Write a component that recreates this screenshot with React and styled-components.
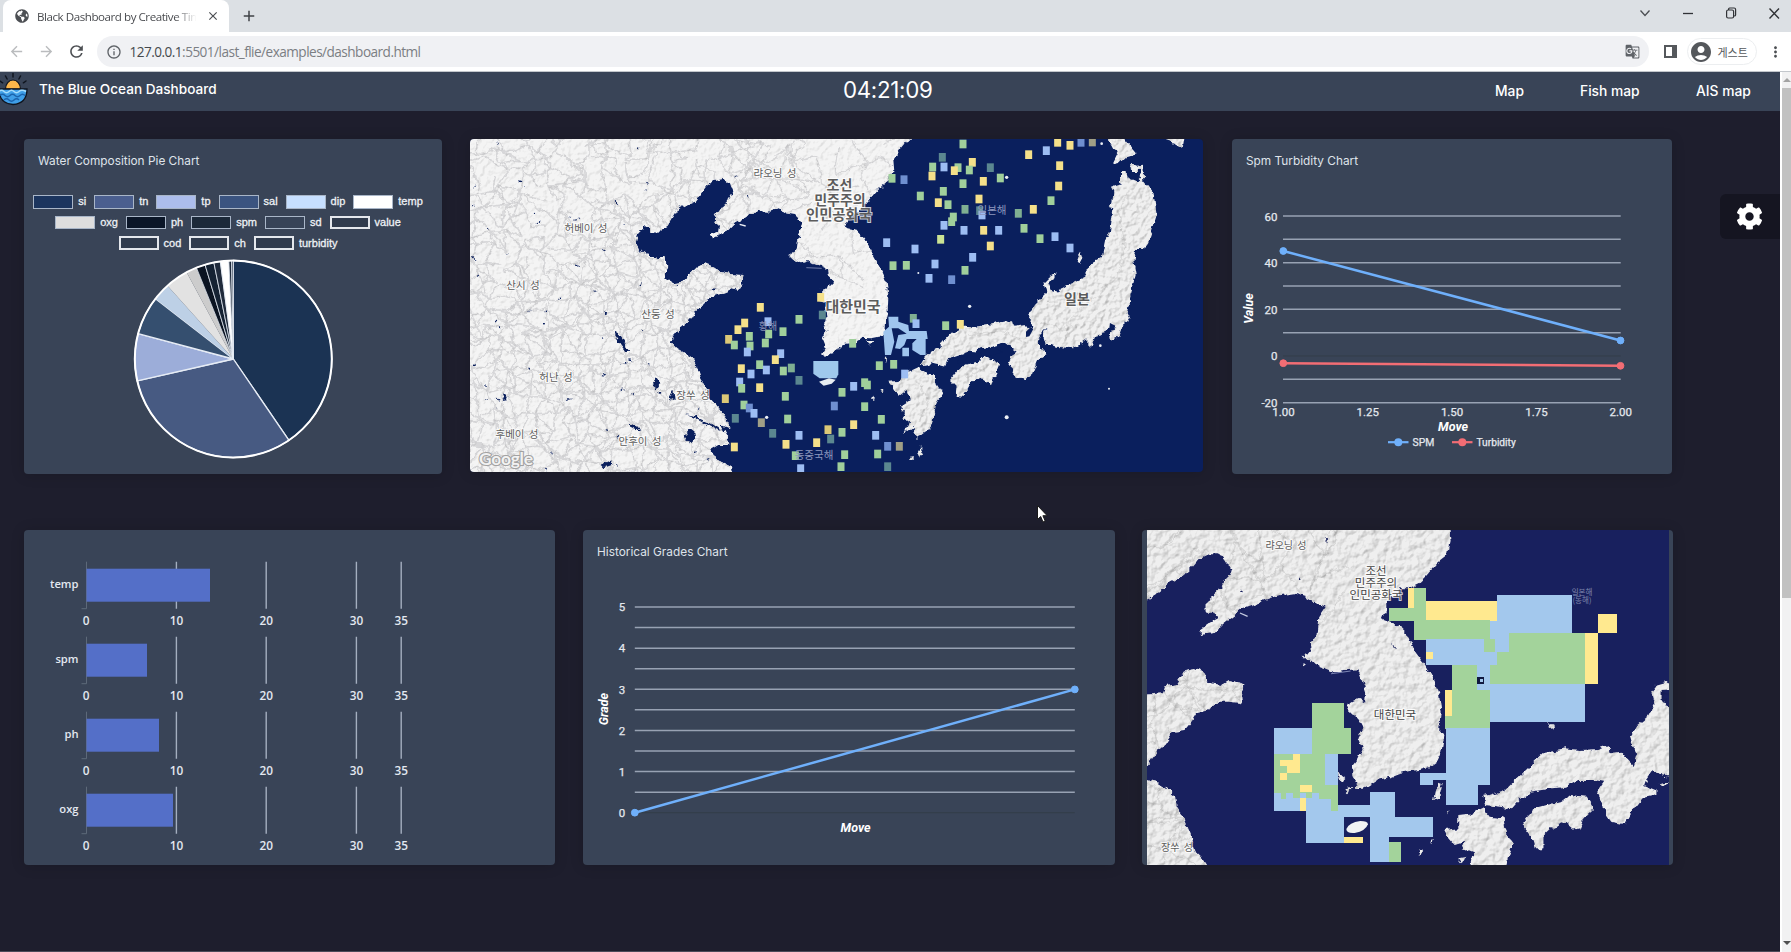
import React from "react";
import styled, { createGlobalStyle, css } from "styled-components";
import { FaCog, FaGlobeAmericas } from "react-icons/fa";
import { MdClose, MdAdd, MdArrowBack, MdArrowForward, MdRefresh, MdInfoOutline, MdGTranslate, MdAccountCircle, MdMoreVert } from "react-icons/md";

const GlobalStyle = createGlobalStyle`
  * { box-sizing: border-box; }
  body { margin: 0; background: #1e1e2d; font-family: Inter, "Noto Sans CJK KR", sans-serif; overflow: hidden; }
`;

const Window = styled.div`
  width: 1791px;
  height: 952px;
  display: flex;
  flex-direction: column;
  position: relative;
  overflow: hidden;
`;

/* ---------- browser chrome ---------- */
const TabStrip = styled.div`
  height: 32px;
  background: #dce0e4;
  display: flex;
  align-items: flex-end;
  padding-left: 3px;
`;
const Tab = styled.div`
  width: 226px;
  height: 32px;
  background: #fff;
  border-radius: 8px 8px 0 0;
  display: flex;
  align-items: center;
  padding: 0 9px 0 12px;
  color: #4c4f53;
`;
const TabTitle = styled.span`
  flex: 1;
  margin: 0 8px 0 8px;
  white-space: nowrap;
  overflow: hidden;
  font: 11.6px "Open Sans", sans-serif;
  letter-spacing: -0.46px;
  color: #4a4c50;
  mask-image: linear-gradient(90deg, #000 86%, transparent 99%);
`;
const NewTab = styled.div`
  width: 40px;
  height: 32px;
  display: flex;
  align-items: center;
  justify-content: center;
  color: #3f4246;
`;
const WindowControls = styled.div`
  margin-left: auto;
  height: 26px;
  display: flex;
  align-items: center;
  align-self: flex-start;
  padding-right: 9px;
  gap: 27px;
`;
const Toolbar = styled.div`
  height: 40px;
  background: #fff;
  border-bottom: 1px solid #c3c7cc;
  display: flex;
  align-items: center;
  padding: 0 7px 0 8px;
`;
const NavIcon = styled.span`
  display: flex;
  width: ${(p) => p.$w || 29.5}px;
  margin-left: ${(p) => (p.$end ? "auto" : 0)};
  color: ${(p) => (p.$off ? "#babcbe" : "#4c4f53")};
`;
const UrlBar = styled.div`
  width: 1552px;
  height: 31px;
  border-radius: 16px;
  background: #f0f1f4;
  display: flex;
  align-items: center;
  padding: 0 9px 0 9px;
  color: #5f6368;
`;
const UrlText = styled.span`
  flex: 1;
  margin-left: 8px;
  font: 13.6px "Open Sans", sans-serif;
  letter-spacing: -0.53px;
  color: #7b7e83;
  b { font-weight: 400; color: #46494d; }
`;
const SidePanelIcon = styled.span`
  width: 13px;
  height: 13px;
  margin: 0 10px 0 15px;
  border: 2px solid #55585c;
  border-right-width: 5px;
`;
const GuestPill = styled.div`
  width: 70px;
  height: 27px;
  border: 1px solid #eceef0;
  border-radius: 14px;
  display: flex;
  align-items: center;
  gap: 5px;
  padding-left: 1px;
  color: #54575b;
  font: 11px "Noto Sans CJK KR", sans-serif;
`;

/* ---------- page ---------- */
const Viewport = styled.div`
  flex: 1;
  display: flex;
  min-height: 0;
`;
const Page = styled.div`
  width: 1780px;
  background: #1e1e2d;
  border-bottom: 1px solid #4b4b5a;
`;
const Scrollbar = styled.div`
  width: 11px;
  background: #f1f1f2;
  border-left: 2px solid #fff;
  display: flex;
  flex-direction: column;
  align-items: center;
`;
const Arrow = styled.i`
  width: 0;
  height: 0;
  border: 4px solid transparent;
  ${(p) => p.$down
    ? css`border-top-color: #505050; margin: auto 0 3px;`
    : css`border-bottom-color: #a3a3a3; margin: 2px 0 6px;`}
`;
const Thumb = styled.div`
  width: 9px;
  height: 510px;
  background: #c1c1c1;
`;
const NavBar = styled.header`
  height: 39px;
  background: #394457;
  color: #fff;
  display: flex;
  align-items: center;
`;
const Brand = styled.div`
  width: 843px;
  display: flex;
  align-items: center;
  gap: 10px;
  font-size: 13.6px;
  font-weight: 500;
  padding-bottom: 5px;
`;
const Clock = styled.div`
  width: 652px;
  font-size: 22.3px;
  padding-bottom: 5px;
  letter-spacing: -0.3px;
`;
const NavLink = styled.a`
  font-size: 13.8px;
  font-weight: 500;
  width: ${(p) => p.$w}px;
  padding-bottom: 2px;
  white-space: nowrap;
`;
const Row = styled.div`
  display: flex;
  align-items: flex-start;
  padding-left: 24px;
  margin-top: ${(p) => p.$top}px;
`;
const Card = styled.section`
  width: ${(p) => p.$w}px;
  height: ${(p) => p.$h || 335}px;
  margin-right: ${(p) => p.$gap || 0}px;
  background: #394457;
  border-radius: 4px;
  overflow: hidden;
  box-shadow: 0 1px 14px rgba(0, 0, 0, 0.16);
  display: flex;
  flex-direction: column;
`;
const MapCard = styled(Card)`
  background: ${(p) => p.$bg || "#394457"};
  padding: 0 ${(p) => p.$pad || 0}px;
`;
const CardTitle = styled.h4`
  margin: 0;
  height: 52px;
  flex: none;
  padding: 13px 0 0 14px;
  font-size: 11.85px;
  line-height: 18px;
  font-weight: 400;
  color: #dfe3ea;
`;
const Legend = styled.div`
  display: flex;
  flex-direction: column;
  gap: 7px;
  padding: 4px 10px 0 0;
`;
const LegendRow = styled.div`
  display: flex;
  justify-content: center;
  gap: 8px;
`;
const LegendItem = styled.span`
  display: flex;
  align-items: center;
  gap: 5px;
  height: 13.7px;
  font: 11px/13px "Liberation Sans", sans-serif;
  -webkit-text-stroke: 0.3px #eef1f5;
  color: #eef1f5;
`;
const Swatch = styled.i`
  width: 40px;
  height: 13.7px;
  background: ${(p) => p.$c};
  border: ${(p) => (p.$thick ? 2 : 1)}px solid ${(p) => (p.$thick ? "#e4e7ec" : "#a9b6c8")};
`;
const PieSvg = styled.svg`
  flex: none;
`;
const Settings = styled.button`
  position: absolute;
  left: 1720px;
  top: 194px;
  width: 60px;
  height: 45px;
  border: 0;
  border-radius: 6px 0 0 6px;
  background: #151521;
  color: #fff;
  display: flex;
  align-items: center;
  padding: 0 0 0 16px;
`;
const Cursor = styled.svg`
  position: absolute;
  left: 1036px;
  top: 504px;
`;

/* ---------- pie ---------- */
const SLICES = [
  [0, 145.6, "#1b3353"], [145.6, 257.2, "#475a82"], [257.2, 284.9, "#9cadd9"], [284.9, 307.8, "#354f6f"],
  [307.8, 318.1, "#bdd0e6"], [318.1, 331.7, "#e2e2e2"], [331.7, 338, "#cccccc"], [338, 343.3, "#0b1422"],
  [343.3, 348.6, "#152233"], [348.6, 352.4, "#202b3c"], [352.4, 357.4, "#ffffff"], [357.4, 359, "#1f2a3b"], [359, 360, "#3a4658"],
];
const LIGHT = ["#bdd0e6", "#e2e2e2", "#cccccc"];
const at = (a, r = 98.5) => {
  const t = ((a - 90) * Math.PI) / 180;
  return `${(209.3 + r * Math.cos(t)).toFixed(2)} ${(168 + r * Math.sin(t)).toFixed(2)}`;
};
const LEGEND = [
  [["si", "#1c355e"], ["tn", "#4b5f8f"], ["tp", "#acbdec"], ["sal", "#3b5480"], ["dip", "#c6dfff"], ["temp", "#ffffff"]],
  [["oxg", "#dedede"], ["ph", "#0b1628"], ["spm", "#1c2939"], ["sd", "#374357"], ["value", "#303b4d", 1]],
  [["cod", "#303b4d", 1], ["ch", "#303b4d", 1], ["turbidity", "#303b4d", 1]],
];
const PieChart = () => (
  <Card $w={418} $gap={28}>
    <CardTitle>Water Composition Pie Chart</CardTitle>
    <Legend>
      {LEGEND.map((row, i) => (
        <LegendRow key={i}>
          {row.map(([t, c, k]) => (
            <LegendItem key={t}><Swatch $c={c} $thick={k} />{t}</LegendItem>
          ))}
        </LegendRow>
      ))}
    </Legend>
    <PieSvg width="418" height="220" viewBox="0 59 418 220">
      {SLICES.map(([a, b, c]) => (
        <path key={a} d={`M209.3 168 L${at(a)} A98.5 98.5 0 ${b - a > 180 ? 1 : 0} 1 ${at(b)} Z`} fill={c}
          stroke={LIGHT.includes(c) ? "none" : "#e6ecf5"} strokeWidth={a > 330 ? 0.8 : 1.3} strokeLinejoin="round" />
      ))}
      <circle cx="209.3" cy="168" r="98.5" fill="none" stroke="#fff" strokeWidth="2" />
    </PieSvg>
  </Card>
);

/* ---------- line charts ---------- */
const ChartText = styled.text`
  font: ${(p) => p.$size || 11.5}px Roboto, sans-serif;
  fill: #e4e8ee;
  stroke: #e4e8ee;
  stroke-width: 0.25px;
  text-anchor: ${(p) => p.$anchor || "middle"};
`;
const AxisTitle = styled.text`
  font: italic 700 12.5px Roboto, sans-serif;
  fill: #fff;
  text-anchor: middle;
`;
const Grid = ({ x1, x2, y0, step, n, dark }) =>
  Array.from({ length: n }, (_, i) => (
    <line key={i} x1={x1} x2={x2} y1={y0 + i * step} y2={y0 + i * step} stroke={i === dark ? "#333d49" : "#98a2b3"} strokeWidth={i === dark ? 1 : 1.5} />
  ));
const Series = ({ pts, color }) => (
  <g fill={color} stroke={color}>
    <line x1={pts[0]} y1={pts[1]} x2={pts[2]} y2={pts[3]} strokeWidth="2.5" />
    <circle cx={pts[0]} cy={pts[1]} r="3.4" /><circle cx={pts[2]} cy={pts[3]} r="3.4" />
  </g>
);
const BLUE = "#6fb0fb";
const RED = "#f26d74";
const SpmChart = () => (
  <Card $w={440}>
    <CardTitle>Spm Turbidity Chart</CardTitle>
    <svg width="440" height="283" viewBox="0 52 440 283">
      <Grid x1={51} x2={388.7} y0={77} step={23.33} n={9} dark={6} />
      {[60, 40, 20, 0, -20].map((v, i) => (
        <ChartText key={v} x="45.5" y={81.5 + i * 46.6} $anchor="end">{v}</ChartText>
      ))}
      {["1.00", "1.25", "1.50", "1.75", "2.00"].map((v, i) => (
        <ChartText key={v} x={51.5 + i * 84.3} y="276.5">{v}</ChartText>
      ))}
      <AxisTitle x="221" y="292">Move</AxisTitle>
      <AxisTitle transform="translate(21 169.5) rotate(-90)">Value</AxisTitle>
      <Series pts={[51.3, 112, 388.5, 201.5]} color={BLUE} />
      <Series pts={[51.3, 224.2, 388.5, 226.8]} color={RED} />
      <g strokeWidth="2.2">
        <line x1="156" x2="176.5" y1="303.2" y2="303.2" stroke={BLUE} /><circle cx="166.3" cy="303.2" r="4" fill={BLUE} />
        <line x1="220" x2="240.5" y1="303.2" y2="303.2" stroke={RED} /><circle cx="230.3" cy="303.2" r="4" fill={RED} />
      </g>
      <ChartText x="180.6" y="307" $anchor="start" $size={10.4}>SPM</ChartText>
      <ChartText x="244.5" y="307" $anchor="start" $size={10.2}>Turbidity</ChartText>
    </svg>
  </Card>
);
const GradesChart = () => (
  <Card $w={532} $gap={27}>
    <CardTitle>Historical Grades Chart</CardTitle>
    <svg width="532" height="283" viewBox="0 52 532 283">
      <Grid x1={51.8} x2={491.8} y0={77} step={20.57} n={11} dark={10} />
      {[5, 4, 3, 2, 1, 0].map((v, i) => (
        <ChartText key={v} x="39" y={81.3 + i * 41.15}>{v}</ChartText>
      ))}
      <AxisTitle x="272.5" y="302">Move</AxisTitle>
      <AxisTitle transform="translate(25 179) rotate(-90)">Grade</AxisTitle>
      <Series pts={[51.8, 282.7, 491.8, 159.4]} color={BLUE} />
    </svg>
  </Card>
);

/* ---------- bars ---------- */
const BarText = styled.text`
  font: 600 ${(p) => (p.$end ? 11.2 : 11.8)}px "Open Sans", sans-serif;
  fill: #e3e8f0;
  text-anchor: ${(p) => (p.$end ? "end" : "middle")};
`;
const BARS = [["temp", 186], ["spm", 123], ["ph", 135], ["oxg", 149]];
const TICKS = [[0, 62], [10, 152.4], [20, 242.2], [30, 332.4], [35, 377.2]];
const BarChart = () => (
  <Card $w={531} $gap={28}>
    <svg width="531" height="335">
      {BARS.map(([name, end], i) => (
        <g key={name} transform={`translate(0 ${i * 75})`}>
          <path d="M62.5 31.7V78.7M57.5 78.7h5" stroke="#5d6979" fill="none" />
          {TICKS.slice(1).map(([t, x]) => <line key={t} x1={x} x2={x} y1="31.7" y2="78.7" stroke="#a4aebf" strokeWidth="1.4" />)}
          <rect x="62.5" y="38.7" width={end - 62.5} height="33" fill="#546fc8" />
          {TICKS.map(([t, x]) => <BarText key={t} x={x} y="95">{t}</BarText>)}
          <BarText $end x="54.5" y="58.4">{name}</BarText>
        </g>
      ))}
    </svg>
  </Card>
);

/* ---------- maps ---------- */
const MapText = styled.text`
  font: ${(p) => p.$b ? 700 : 400} ${(p) => p.$s}px "Noto Sans CJK KR", sans-serif;
  fill: ${(p) => p.$c || "#5c5c5c"};
  text-anchor: middle;
  word-spacing: 2px;
  paint-order: stroke;
  stroke: ${(p) => (p.$halo ? p.$halo : "rgba(255,255,255,.75)")};
  stroke-width: ${(p) => (p.$halo === "none" ? 0 : 2)}px;
`;
const MAIN = "-40,-30 1370,-30 1340,12 1325,20 1305,45 1285,75 1288,110 1275,130 1250,150 1220,185 1185,225 1158,245 1138,270 1150,280 1175,285 1200,310 1225,360 1250,405 1265,440 1270,480 1268,530 1260,560 1258,602 1220,610 1190,608 1165,628 1135,630 1115,645 1095,650 1085,665 1068,655 1080,635 1072,615 1085,590 1075,575 1085,550 1080,520 1088,500 1062,492 1070,465 1090,455 1105,440 1090,425 1085,400 1070,392 1050,385 1030,378 1010,385 985,375 970,360 995,345 998,320 1005,290 1012,262 990,240 960,235 938,220 910,230 880,228 860,235 830,255 810,265 790,285 765,300 745,310 735,300 760,290 762,275 748,262 752,240 765,220 785,200 805,170 795,145 775,132 745,138 725,152 705,180 690,200 660,212 635,225 620,250 605,275 580,293 560,290 540,276 520,295 512,320 522,345 545,358 575,366 598,366 610,390 600,405 600,430 625,445 650,440 665,425 685,410 700,395 720,388 745,398 770,412 800,418 835,420 832,445 825,465 800,460 780,470 745,480 725,495 710,515 690,530 680,550 660,568 645,580 630,600 615,620 635,640 660,655 685,670 695,700 705,730 722,760 735,790 760,820 785,850 790,880 765,870 785,905 790,930 760,930 735,945 750,970 780,985 800,995 815,1050 -40,1050";
const J1 = [
  "805,-30 820,12 835,40 850,50 835,80 850,88 870,68 905,58 890,40 868,12 850,-30",
  "885,85 905,95 925,92 928,140 955,170 965,240 950,290 930,345 900,345 895,380 902,420 885,490 875,535 885,555 860,575 850,605 828,615 825,595 840,575 815,580 800,600 780,605 768,640 757,635 757,610 735,625 715,640 660,635 632,625 625,600 635,580 615,600 605,620 635,660 605,680 590,720 570,733 545,725 520,690 530,660 545,650 510,625 470,635 440,640 420,652 400,650 370,660 340,670 330,695 290,685 255,692 270,665 310,640 355,590 375,575 420,575 470,568 500,562 530,555 535,572 570,568 578,580 592,575 590,560 578,545 600,510 635,475 625,440 640,425 662,412 655,432 640,442 650,465 665,470 700,450 745,430 770,385 800,370 810,320 825,290 835,220 818,215 832,205 835,170 828,155 858,145 858,108 875,108 878,130 905,140 918,128 915,108 888,108",
  "390,690 430,680 450,662 495,685 485,710 468,748 440,730 410,740 385,783 362,780 365,755 345,735 370,705",
  "215,712 250,695 275,715 300,718 300,740 322,775 305,800 290,870 275,890 245,912 235,875 207,895 225,865 205,850 210,830 195,815 225,795 215,765 190,785 175,760 160,740 190,738",
  "735,350 722,372 732,388 742,368", "975,-5 1050,-5 1043,40 1020,25 990,14", "110,790 120,785 118,797 108,797", "133,770 143,765 140,775",
  "222,962 236,960 236,972 222,974", "262,932 262,950 252,968 248,958", "146,665 154,665 150,682", "3,625 15,640 -10,640", "100,615 114,615 108,633",
];
const rnd = (seed) => () => {
  seed = (seed * 16807) % 2147483647;
  return seed / 2147483647;
};
const roads = (x0, y0, x1, y1, step, seed, keep) => {
  const r = rnd(seed), nx = Math.ceil((x1 - x0) / step), ny = Math.ceil((y1 - y0) / step);
  const p = Array.from({ length: ny + 1 }, (_, j) =>
    Array.from({ length: nx + 1 }, (_, i) => [x0 + (i + (r() - 0.5) * 1.1) * step, y0 + (j + (r() - 0.5) * 1.1) * step]));
  let d = "";
  const link = (a, b) => {
    const mx = (a[0] + b[0]) / 2 + (r() - 0.5) * step * 0.5, my = (a[1] + b[1]) / 2 + (r() - 0.5) * step * 0.5;
    if (r() < keep(a[0], a[1])) d += `M${a[0].toFixed(0)} ${a[1].toFixed(0)}Q${mx.toFixed(0)} ${my.toFixed(0)} ${b[0].toFixed(0)} ${b[1].toFixed(0)}`;
  };
  for (let j = 0; j < ny; j++)
    for (let i = 0; i < nx; i++) {
      link(p[j][i], p[j][i + 1]);
      link(p[j][i], p[j + 1][i]);
      if (r() < 0.45) link(p[j][i], p[j + 1][i + 1]);
      else if (r() < 0.3) link(p[j][i + 1], p[j + 1][i]);
    }
  return d;
};
const ROADS1 = roads(0, 0, 860, 1030, 38, 71, (x, y) => (x > 330 && y > 220 ? 1 : y > 480 ? 0.92 : 0.62));
const ROADS2 = roads(840, 0, 1300, 460, 58, 13, (x) => (x < 1000 ? 0.85 : 0.4));
const LAKES1 = (() => {
  const r = rnd(991);
  return Array.from({ length: 70 }, () => [20 + r() * 850, 20 + r() * 990, 1.5 + r() * 5, 1 + r() * 1.8, r() * 90 - 45]);
})();
const PIN = { y: "#f5e08a", o: "#dcc877", g: "#a0cf9b", h: "#7faf92", d: "#5b8790", b: "#9dbdf3", c: "#6f8fd0", m: "#a09f86", l: "#cbe394" };
const PINS1 = "y886,517 y839,564 y819,584 o791,613 g808,630 g853,604 g855,633 b847,651 b909,560 g911,597 g901,624 g1002,553 g954,590 b947,656 y931,674 y829,701 b858,717 g884,689 b904,705 g955,708 h979,699 d1002,736 b824,741 g830,760 y884,758 o781,791 g961,784 g837,810 c853,819 b867,835 d811,850 m889,863 g968,852 d923,895 b1002,901 y963,928 y808,936 g991,962 b1007,1001 y1055,923 o1089,884 d1097,912 c1108,813 y1067,487 d1072,540";
const PINS2 = "g384,27 d322,67 g293,96 b327,96 y291,123 g369,98 y358,107 y412,82 g403,105 d466,98 g496,129 y445,139 g384,146 g171,130 c207,134 g256,183 g325,169 y310,203 g339,209 y432,192 h390,223 d434,227 b441,240 h550,235 y595,223 g648,197 y671,153 y674,92 y581,59 b634,47 y668,22 y705,31 c738,22 m772,21 g355,246 g350,260 b327,271 l317,313 b387,286 y446,286 b491,286 g567,280 g615,311 b660,305 b705,339 y466,333 b155,323 b240,342 b413,367 b300,387 g174,392 g214,391 g390,406 b282,430 c350,434 h235,550 b243,566 g332,572 y376,568 g133,692 g176,688 b209,717 g53,625 b56,754 g21,772 g89,743 g97,750 g89,815 y56,869 g21,892 g139,853 b122,901 c158,934 m193,934 g128,957 g29,959 g18,995 d158,995";
const Pins = ({ data }) => data.split(" ").map((s) => {
  const [x, y] = s.slice(1).split(",").map(Number);
  return <rect key={s} x={x - 10.5} y={y - 13} width="21" height="26" fill={PIN[s[0]]} />;
});
const Relief = ({ id, freq, scale, amt }) => (
  <filter id={id} x="0" y="0" width="100%" height="100%" colorInterpolationFilters="sRGB">
    <feTurbulence type="fractalNoise" baseFrequency="0.045" numOctaves="3" seed="4" result="w" />
    <feDisplacementMap in="SourceGraphic" in2="w" scale="20" xChannelSelector="R" yChannelSelector="G" result="land" />
    <feTurbulence type="fractalNoise" baseFrequency={freq} numOctaves="3" seed="9" result="n" />
    <feColorMatrix in="n" type="matrix" values="0 0 0 0 0  0 0 0 0 0  0 0 0 0 0  1 0 0 0 0" result="h" />
    <feDiffuseLighting in="h" surfaceScale={scale} diffuseConstant={amt} lightingColor="#ffffff" result="lit">
      <feDistantLight azimuth="225" elevation="58" />
    </feDiffuseLighting>
    <feBlend in="land" in2="lit" mode="multiply" result="m" />
    <feComposite in="m" in2="land" operator="in" />
  </filter>
);
const NAVY = "#0a1f5d";
const OceanMap = () => (
  <MapCard $w={733} $h={333} $gap={29} $bg={NAVY}>
    <svg width="733" height="333">
      <defs>
        <clipPath id="mainClip"><polygon points={MAIN} /></clipPath>
        <Relief id="plain" freq="0.07" scale="1.1" amt="1.18" />
        <Relief id="rough" freq="0.06" scale="2.6" amt="1.16" />
      </defs>
      <g transform="translate(-5 -4) scale(.33333)">
        <g filter="url(#plain)">
          <polygon points={MAIN} fill="#f4f4f4" />
          <g clipPath="url(#mainClip)" fill="none" stroke="#d7d7d9">
            <path d={ROADS1} strokeWidth="4.8" />
            <path d={ROADS2} strokeWidth="4" />
          </g>
          <g fill={NAVY} clipPath="url(#mainClip)">
            {LAKES1.map(([x, y, a, b, t], i) => <ellipse key={i} cx={x} cy={y} rx={a} ry={b} transform={`rotate(${t} ${x} ${y})`} />)}
            <path d="M447 590l12 8 20 28 14 24-10 2-18-26-18-26zM418 525l8 6-2 12-6-6zM570 722l14 18 6 10-16 10-14-10zM625 765l4 34-16-10zM545 678l10 6-4 8zM494 868l14 6 14 2-12 10-14-6zM665 890l14-8 12 10 2 18-14 14-16-8-4-16zM662 838l30 6 14 8 34 16 30 20-16-4-46-26-30-14zM95 794l8 2-2 8zM116 770l14 14-4 12-14 2 8-10zM410 992l30-16-4 16-20 8zM240 998l6 2-2 10z" />
          </g>
        </g>
        <g transform="translate(1110 0)" filter="url(#rough)">
          {J1.map((p) => <polygon key={p} points={p} fill="#f0f0f0" />)}
          <path d="M690 620 700 560 740 520 790 480 850 420 870 330 850 230 880 170M620 560 680 580 740 570M640 500 700 490M400 600 500 590 570 620M250 740 280 800 250 860M390 730 450 700" fill="none" stroke="#dcdcdc" strokeWidth="4" />
        </g>
        <g fill={NAVY}>
          <path d="M1683 590l14-14 8 6-12 22-10 2zM1935 564l16 8-8 14-10-8zM1550 645l36-8 26 14-44 14-22-6zM1480 668l30-6-14 20-18 4z" />
        </g>
        <g fill="#eceff5">
          <circle cx="905" cy="847" r="5" /><circle cx="1625" cy="127" r="5" /><circle cx="1625" cy="847" r="6" /><circle cx="1514" cy="514" r="5" />
          <circle cx="1932" cy="761" r="3" /><circle cx="1360" cy="414" r="3" /><circle cx="1906" cy="632" r="4" /><circle cx="1910" cy="26" r="4" />
          <path d="M824 268l18 5" stroke="#eceff5" strokeWidth="4" />
          <path d="M1024 398l46 2" stroke="#6f7ba8" strokeWidth="3" />
        </g>
        <path d="M1045 678h75v40l-6 12h-50l-19-14z" fill="#9fc8ec" />
        <path d="M1062 740l30-10 20 4-12 12-24 6z" fill="#e7edf2" />
        <g transform="translate(1110 0)">
          <path d="M160 545H190V560L220 570 222 588H275L278 612H272V660H256L232 645V625L245 612H215L208 630 195 642 180 640 190 600 215 596 190 580H170L178 620 168 660H150L145 590 162 575ZM202 638h20v26h-20z" fill="#9fc5ee" />
        </g>
        <Pins data={PINS1} />
        <g transform="translate(1110 0)"><Pins data={PINS2} /></g>
      </g>
      <MapText x="305" y="38" $s={10.5}>랴오닝 성</MapText>
      <MapText x="116" y="93" $s={10.5}>허베이 성</MapText>
      <MapText x="53" y="150" $s={10.5}>산시 성</MapText>
      <MapText x="188" y="179" $s={10.5}>산둥 성</MapText>
      <MapText x="86" y="242" $s={10.5}>허난 성</MapText>
      <MapText x="223" y="260" $s={10.5}>장쑤 성</MapText>
      <MapText x="47" y="299" $s={10.5}>후베이 성</MapText>
      <MapText x="170" y="306" $s={10.5}>안후이 성</MapText>
      <MapText x="298" y="191" $s={10} $c="#8c94b8" $halo="none">황해</MapText>
      <MapText x="522" y="75" $s={10.5} $c="#8d97bd" $halo="none">일본해</MapText>
      <MapText x="344" y="320" $s={10.5} $c="#8d97bd" $halo="none">동중국해</MapText>
      <MapText x="369.5" y="51" $s={14} $b>조선</MapText>
      <MapText x="370" y="66" $s={14} $b>민주주의</MapText>
      <MapText x="369" y="81" $s={14.4} $b>인민공화국</MapText>
      <MapText x="383" y="173" $s={15} $b>대한민국</MapText>
      <MapText x="607" y="165" $s={14} $b>일본</MapText>
      <text x="9" y="326" fontFamily="Lato, sans-serif" fontSize="17.5" fontWeight="700" fill="#f2f2f2" stroke="#a2a2a2" strokeWidth="2.2" paintOrder="stroke" textLength="54">Google</text>
    </svg>
  </MapCard>
);

const SEA2 = "#18205e";
const LAND2 = [
  "-20,-30 905,-30 905,15 908,50 900,90 870,115 840,150 815,175 785,190 760,190 755,215 720,225 720,255 710,280 735,290 765,310 790,335 805,380 835,420 860,470 875,510 882,560 878,620 890,630 880,690 870,710 850,725 820,735 790,738 760,745 735,755 700,765 670,785 650,795 630,795 640,770 625,750 625,720 640,700 652,670 640,640 655,610 640,580 615,555 608,540 640,522 662,535 665,500 655,470 640,430 610,432 575,442 545,430 520,420 500,400 485,400 508,370 500,350 525,330 530,280 552,245 520,235 490,215 455,205 420,210 385,220 350,235 310,250 280,275 250,300 230,320 190,330 188,315 215,295 238,282 225,262 203,255 203,235 225,215 245,190 265,160 283,130 265,115 245,88 210,88 185,100 160,130 130,160 100,175 65,205 20,240 -20,270",
  "-20,512 80,505 88,480 120,475 140,440 165,432 195,440 210,470 250,478 270,465 315,478 305,500 308,535 270,530 240,530 215,555 180,565 165,590 145,615 110,620 85,660 65,675 45,705 20,740 -20,760",
  "-20,745 20,760 80,780 115,810 120,850 145,890 165,940 175,985 190,1000 225,1055 -20,1055",
  "1590,455 1550,465 1500,480 1485,500 1495,540 1480,570 1445,600 1425,635 1430,655 1445,685 1435,720 1415,700 1400,680 1365,685 1362,660 1330,672 1280,675 1240,670 1180,680 1160,700 1130,730 1100,760 1065,795 1020,810 1002,812 1010,840 1050,845 1085,850 1110,820 1140,800 1200,790 1240,785 1275,765 1320,765 1350,770 1330,800 1345,830 1350,860 1370,890 1410,898 1430,860 1460,820 1500,810 1500,795 1465,780 1470,765 1490,735 1510,750 1590,762",
  "1150,850 1185,840 1225,830 1250,810 1300,815 1320,850 1290,880 1275,918 1240,890 1200,905 1175,930 1175,970 1150,970 1140,935 1115,900 1130,880",
  "930,870 975,865 1005,850 1020,875 1060,880 1065,905 1075,945 1090,955 1075,990 1060,1055 960,1055 975,985 940,970 950,950 920,960 900,935 890,915 930,910",
  "875,770 885,775 875,820 860,830 865,800", "815,970 832,976 820,990", "850,940 856,942 852,960", "1510,775 1532,768 1530,778 1512,784", "1192,598 1206,598 1208,610 1194,612",
  "900,860 908,860 904,870", "605,790 622,786 615,802", "930,1000 950,996 940,1015", "480,415 492,418 484,424", "585,745 605,760 592,768",
];
const B = "#a3c8ed", G = "#a3d39b", Y = "#ffe98f";
const ZONES = [
  [1040, 209, 218, 116, B], [1020, 286, 57, 95, B], [802, 190, 36, 153, G], [730, 248, 72, 38, G], [786, 190, 16, 58, Y], [838, 228, 202, 58, Y],
  [838, 286, 182, 57, G], [1077, 325, 218, 152, G], [1040, 380, 37, 97, G], [1020, 418, 20, 59, G], [838, 343, 165, 76, B], [1003, 380, 37, 39, B],
  [1003, 343, 33, 37, G], [838, 381, 20, 19, Y], [912, 419, 73, 191, G], [985, 419, 36, 76, B], [985, 495, 37, 115, G], [893, 573, 19, 37, G],
  [893, 495, 19, 78, Y], [1022, 477, 273, 114, B], [1295, 325, 37, 150, Y], [1333, 266, 54, 58, Y], [895, 610, 127, 170, B], [895, 780, 90, 58, B],
  [820, 743, 75, 20, B], [820, 763, 37, 17, B], [985, 457, 18, 20, "#10183f"], [993, 462, 7, 9, B],
  [510, 534, 91, 153, G], [601, 610, 19, 77, G], [401, 610, 109, 77, B], [401, 687, 182, 116, G], [548, 687, 35, 94, B], [401, 803, 91, 54, B],
  [492, 803, 91, 55, B], [492, 840, 110, 112, B], [528, 781, 55, 40, G], [565, 820, 18, 38, G], [420, 803, 15, 17, G], [455, 803, 19, 16, G], [492, 803, 18, 14, G],
  [583, 840, 92, 37, B], [675, 801, 73, 134, B], [675, 935, 55, 76, B], [748, 877, 108, 58, B], [730, 952, 36, 58, G], [601, 935, 55, 17, Y],
  [455, 687, 19, 57, Y], [418, 706, 37, 17, Y], [437, 722, 37, 21, Y], [418, 744, 19, 19, Y], [474, 781, 36, 20, Y], [474, 820, 18, 38, Y],
];
const ROADS3 = roads(0, 0, 560, 300, 75, 37, () => 0.7) + roads(0, 430, 320, 1040, 60, 5, () => 0.7);
const ZoneMap = () => (
  <MapCard $w={531} $pad={4.5}>
    <svg width="522" height="335">
      <defs>
        <clipPath id="landClip">{LAND2.slice(0, 3).map((p) => <polygon key={p} points={p} />)}</clipPath>
        <Relief id="relief2" freq="0.045" scale="2.6" amt="1.15" />
      </defs>
      <rect width="522" height="335" fill={SEA2} />
      <g transform="translate(-12 -5) scale(.3476 .33333)">
        <g filter="url(#relief2)">
          {LAND2.map((p) => <polygon key={p} points={p} fill="#efefef" />)}
          <path d={ROADS3} clipPath="url(#landClip)" fill="none" stroke="#d9d9d9" strokeWidth="4.5" />
          <path d="M1515 495l60-4v56l-46-4-14-20zM738 350l8 16 6 8-8-6zM546 36l10 8-4 4zM302 200l6-10 2 12zM470 165l4-8 2 8z" fill={SEA2} />
        </g>
        <path d="M302 264l22 10" stroke="#c4cae0" strokeWidth="4" />
        <path d="M564 446l56-8" stroke="#7d86b4" strokeWidth="3" />
        <g shapeRendering="crispEdges">
          {ZONES.map(([x, y, w, h, c], i) => <rect key={i} x={x} y={y} width={w + 0.6} height={h + 0.6} fill={c} />)}
          <rect x="601" y="877" width="74" height="58" fill={SEA2} />
        </g>
        <path d="M608 912q8-20 40-24 22 0 22 10-6 20-38 26-24 2-24-12z" fill="#f1f3f3" />
      </g>
      <MapText x="139" y="19" $s={10}>랴오닝 성</MapText>
      <MapText x="229" y="45" $s={11.5} $c="#444">조선</MapText>
      <MapText x="229" y="56.5" $s={11.5} $c="#444">민주주의</MapText>
      <MapText x="229" y="68.5" $s={11.5} $c="#444">인민공화국</MapText>
      <MapText x="248" y="189" $s={11.5} $c="#444">대한민국</MapText>
      <MapText x="435" y="65" $s={7.5} $c="#7f86ad" $halo="none">일본해</MapText>
      <MapText x="435" y="73" $s={7.5} $c="#7f86ad" $halo="none">(동해)</MapText>
      <MapText x="30" y="321" $s={10}>장쑤 성</MapText>
    </svg>
  </MapCard>
);

const Logo = () => (
  <svg width="29" height="34" viewBox="0 0 29 34">
    <g stroke="#10151f" strokeWidth="1.5" strokeLinecap="round">
      <path d="M13 1.500v3.500M5.500 4l1.600 3M20.500 4l-1.600 3M0 9l2.600 1.800M26 9l-2.600 1.800" />
    </g>
    <path d="M5.500 17a7.500 9 0 0 1 15 0z" fill="#fdb64a" stroke="#10151f" strokeWidth="1.200" />
    <path d="M-1 17H27Q27 31.500 13 32.500-1 31.500-1 17z" fill="#3f9fe8" stroke="#10151f" strokeWidth="1.300" />
    <g fill="none" strokeWidth="1.500">
      <path d="M-1 19.500q2.500-2.500 5 0t5 0 5 0 5 0 7 0" stroke="#a5dcfb" />
      <path d="M0 23.500q2.500-2.500 5 0t5 0 5 0 5 0 5 0M4 28q2.500-2.500 5 0t5 0 5 0" stroke="#1c64ad" />
    </g>
  </svg>
);

export default function App() {
  return (
    <Window>
      <GlobalStyle />
      <TabStrip>
        <Tab>
          <FaGlobeAmericas size={14} />
          <TabTitle>Black Dashboard by Creative Tim</TabTitle>
          <MdClose size={14} />
        </Tab>
        <NewTab><MdAdd size={18} /></NewTab>
        <WindowControls>
          <svg width="16" height="16" fill="none" stroke="#4b4e52" strokeWidth="1.3"><path d="M3.500 5.500 8 10.500l4.500-5" /></svg>
          <svg width="16" height="16" fill="none" stroke="#303236" strokeWidth="1.300"><path d="M3 8.500h10" /></svg>
          <svg width="16" height="16" fill="none" stroke="#303236" strokeWidth="1.200"><rect x="3.600" y="5" width="7" height="8" rx="1.500" /><path d="M5.600 5V4q0-1 1-1h4.500q1.500 0 1.500 1.500V10q0 1-1.500 1" /></svg>
          <svg width="16" height="16" fill="none" stroke="#303236" strokeWidth="1.400"><path d="M3.500 3.500l9.500 10M13 3.500l-9.500 10" /></svg>
        </WindowControls>
      </TabStrip>
      <Toolbar>
        <NavIcon $off><MdArrowBack size={17} /></NavIcon>
        <NavIcon $off><MdArrowForward size={17} /></NavIcon>
        <NavIcon><MdRefresh size={19} /></NavIcon>
        <UrlBar>
          <MdInfoOutline size={16} />
          <UrlText><b>127.0.0.1</b>:5501/last_flie/examples/dashboard.html</UrlText>
          <MdGTranslate size={15} />
        </UrlBar>
        <SidePanelIcon />
        <GuestPill><MdAccountCircle size={24} />게스트</GuestPill>
        <NavIcon $w={17} $end><MdMoreVert size={18} /></NavIcon>
      </Toolbar>
      <Viewport>
        <Page>
          <NavBar>
            <Brand><Logo />The Blue Ocean Dashboard</Brand>
            <Clock>04:21:09</Clock>
            <NavLink $w={85}>Map</NavLink>
            <NavLink $w={116}>Fish map</NavLink>
            <NavLink $w={60}>AIS map</NavLink>
          </NavBar>
          <Row $top={28}>
            <PieChart />
            <OceanMap />
            <SpmChart />
          </Row>
          <Row $top={56}>
            <BarChart />
            <GradesChart />
            <ZoneMap />
          </Row>
        </Page>
        <Scrollbar><Arrow /><Thumb /><Arrow $down /></Scrollbar>
      </Viewport>
      <Settings aria-label="settings"><FaCog size={27} /></Settings>
      <Cursor width="14" height="21" viewBox="0 0 14 21"><path d="M1.500 1.500v14l3.200-3 2.300 5.500 2.200-1-2.300-5.300h4.300z" fill="#fff" stroke="#1a1a1a" strokeWidth="1" /></Cursor>
    </Window>
  );
}
